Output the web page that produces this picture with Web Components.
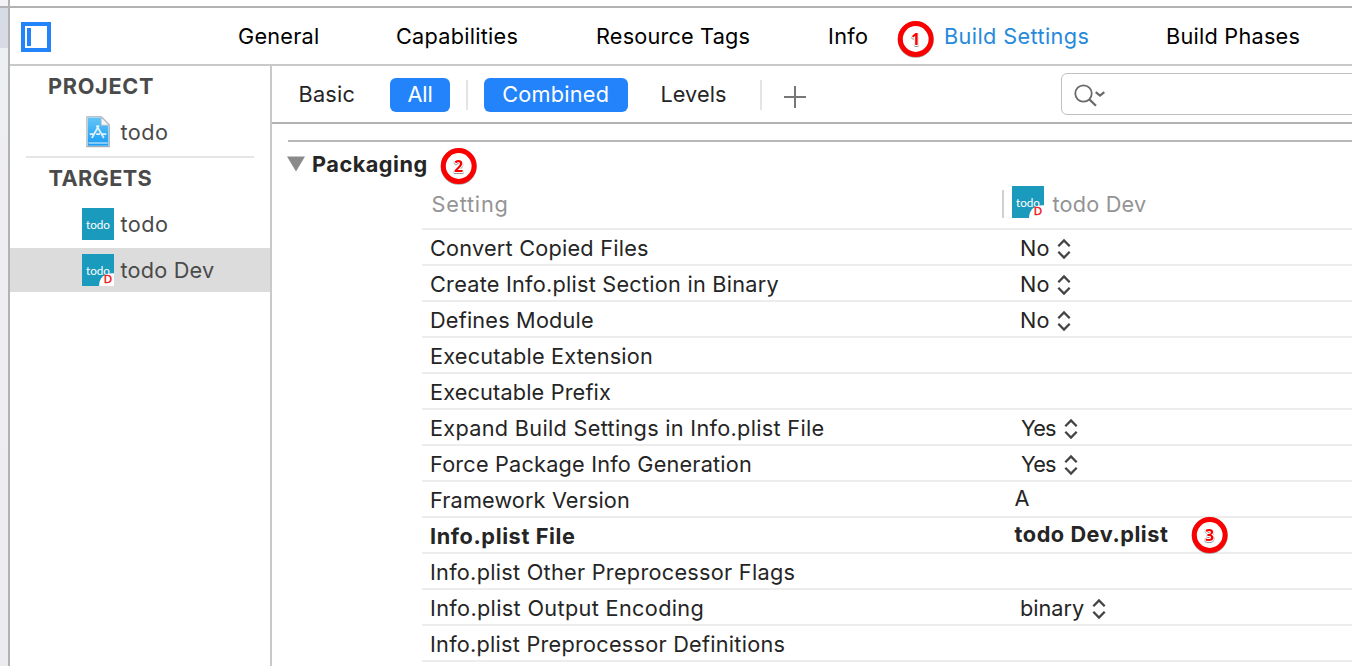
<!DOCTYPE html>
<html lang="en">
<head>
<meta charset="utf-8">
<title>Build Settings</title>
<style>
html, body { margin: 0; height: 100%; overflow: hidden; background: #fff; }
body { font-family: Inter, "Liberation Sans", sans-serif; font-size: 21.7px; font-weight: 400; color: #252525; }
</style>
</head>
<body>
<xc-window></xc-window>
<script>
const define = (name, html, setup) => {
  const tpl = document.createElement('template');
  tpl.innerHTML = html;
  customElements.define(name, class extends HTMLElement {
    connectedCallback() {
      if (this.shadowRoot) return;
      this.attachShadow({ mode: 'open' }).append(tpl.content.cloneNode(true));
      if (setup) setup.call(this, this.shadowRoot);
    }
  });
};
const ctx = document.createElement('canvas').getContext('2d');

/* A single-line label tracked to a given width; its box hugs the glyphs. */
define('xc-text', `<style>
:host { display: block; flex: none; line-height: 30px; height: 30px; white-space: nowrap; }
span { display: block; }
</style><span></span>`, function (root) {
  const s = root.querySelector('span'), text = this.getAttribute('text'), w = +this.getAttribute('w');
  const cs = getComputedStyle(this);
  s.textContent = text;
  ctx.font = `${cs.fontWeight} ${cs.fontSize} ${cs.fontFamily}`;
  const m = ctx.measureText(text);
  this.style.width = w + 'px';
  s.style.marginLeft = m.actualBoundingBoxLeft + 'px';
  if (text.length > 1) s.style.letterSpacing = ((w - m.actualBoundingBoxLeft - m.actualBoundingBoxRight) / (text.length - 1)).toFixed(3) + 'px';
});

define('xc-badge', `<style>
:host { display: block; flex: none; width: 38px; height: 38px; }
svg { display: block; overflow: visible; }
text { font: 700 16px "Noto Sans", "Open Sans", sans-serif; text-anchor: middle; filter: drop-shadow(0 1px .4px rgba(0,0,0,.4)); }
</style><svg width="38" height="38" viewBox="0 0 38 38">
<circle cx="18.7" cy="19.6" r="15.6" fill="none" stroke="#555" stroke-opacity=".55" stroke-width="5"/>
<circle cx="18.7" cy="19" r="15.4" fill="#fff" stroke="#fb0000" stroke-width="5"/>
<text x="18.7" y="25" fill="#f90000" stroke="#fff" stroke-width="2" stroke-linejoin="round" paint-order="stroke"></text>
</svg>`, function (root) {
  root.querySelector('text').textContent = this.getAttribute('n');
});

define('xc-app-icon', `<style>
:host { display: block; flex: none; width: 32px; height: 32px; }
svg { display: block; }
text { font-family: Lato, sans-serif; }
</style><svg width="32" height="32" viewBox="0 0 32 32">
<rect width="32" height="32" fill="#1a9abc"/>
<text x="4" y="20.8" font-size="12" fill="#fff" textLength="24" lengthAdjust="spacingAndGlyphs">todo</text>
<g><path d="M17 32Q17.4 20 30 19.2H32V32Z" fill="#fff"/>
<text x="21.8" y="29" font-size="11.5" style="font-family:'Open Sans',sans-serif" fill="#f01820" stroke="#f01820" stroke-width=".5">D</text></g></svg>`, function (root) {
  if (!this.hasAttribute('dev')) root.querySelector('g').remove();
});

define('xc-project-icon', `<style>:host { display: block; flex: none; width: 26px; height: 32px; } svg { display: block; }</style>
<svg width="26" height="32" viewBox="0 0 26 32">
<defs><linearGradient id="g" x2="0" y2="1"><stop stop-color="#62c4f6"/><stop offset="1" stop-color="#1a9cf4"/></linearGradient></defs>
<g transform="translate(.9 0)">
<path d="M1 .7H15.5L23.4 8.8V30.6H1Z" fill="#fff" stroke="#a5adb3" stroke-width="1.1"/>
<path d="M1.9 1.6H15L22.5 9.6V29.7H1.9Z" fill="url(#g)"/>
<path d="M15.3 1.2V9.2H23Z" fill="#f4f6f8" stroke="#b4bdc4" stroke-width=".8"/>
<path d="M2.6 27H21.8" stroke="#fff" stroke-width="1.1" opacity=".85"/>
<path d="M13 9.5L6 22M10.6 9.5L18 22M3.8 18.2H8.2M10.3 18.2H14M16 18.2H20.4" fill="none" stroke="#fff" stroke-width="1.7" opacity=".85"/></g>
</svg>`);

define('xc-tabs', `<style>
:host { display: flex; height: 56px; align-items: center; border-bottom: 2px solid #c9c9c9; color: #000; padding-left: 11px; }
.nav { flex: none; width: 30px; height: 30px; margin-top: 2px; margin-right: 188px; }
.a { margin-right: 79px; } .b { margin-right: 79.5px; } .c { margin-right: 79.5px; }
.d { margin-right: 30px; } xc-badge { margin: 6px 10px 0 0; }
.on { color: #2589dc; margin-right: 78.5px; }
</style>
<svg class="nav" viewBox="0 0 30 30"><path d="M2 2H28V28H2Z" fill="none" stroke="#2383fb" stroke-width="4"/><path d="M6 6H10V24H6Z" fill="#2383fb"/></svg>
<xc-text class="a" text="General" w="79"></xc-text>
<xc-text class="b" text="Capabilities" w="120.5"></xc-text>
<xc-text class="c" text="Resource Tags" w="152.5"></xc-text>
<xc-text class="d" text="Info" w="38"></xc-text>
<xc-badge n="1"></xc-badge>
<xc-text class="on" text="Build Settings" w="143.5"></xc-text>
<xc-text text="Build Phases" w="132.5"></xc-text>`);

define('xc-side-item', `<style>
:host { display: flex; align-items: center; height: 44px; padding-left: 72px; color: #4a4a4a; }
:host([selected]) { background: #dcdcdc; }
.i { width: 32px; margin-right: 6.5px; display: flex; justify-content: center; }
</style><div class="i"><slot></slot></div>`, function (root) {
  const n = document.createElement('xc-text');
  n.setAttribute('text', this.getAttribute('text')); n.setAttribute('w', this.getAttribute('w'));
  root.append(n);
});

define('xc-sidebar', `<style>
:host { display: block; flex: none; width: 260px; border-right: 2px solid #c9c9c9; }
.h { font-weight: 700; color: #4a4a4a; margin-left: 39px; }
.p { padding-top: 5px; } .t { margin-left: 38.5px; } hr { border: 0; height: 2px; background: #e6e6e6; margin: 2px 16px 5px; }
.gap { height: 9px; } .sp { height: 2px; }
</style>
<xc-text class="h p" text="PROJECT" w="104"></xc-text><div class="gap"></div>
<xc-side-item text="todo" w="46.5"><xc-project-icon></xc-project-icon></xc-side-item>
<hr>
<xc-text class="h t" text="TARGETS" w="103"></xc-text><div class="gap"></div>
<xc-side-item text="todo" w="46.5"><xc-app-icon></xc-app-icon></xc-side-item><div class="sp"></div>
<xc-side-item selected text="todo Dev" w="93.5"><xc-app-icon dev></xc-app-icon></xc-side-item>`);

define('xc-toolbar', `<style>
:host { display: flex; align-items: center; height: 56px; border-bottom: 2px solid #b2b2b2; padding-left: 27.5px; }
.pill { display: flex; flex: none; justify-content: center; align-items: center; height: 34px; margin-top: 2px; border-radius: 6px; background: #2383fb; color: #fff; }
.pill xc-text { margin-top: -2px; margin-left: -1px; }
.all { width: 60px; margin-left: 35.5px; } .comb { width: 144px; margin-left: 16px; }
.sep { flex: none; width: 2px; height: 30px; margin-top: 2px; background: #e4e4e4; }
.plus { flex: none; margin: 6px 0 0 22px; }
.search { flex: none; box-sizing: border-box; width: 320px; height: 42px; border: 1.5px solid #c0c0c0; border-radius: 6px; margin-left: 255px; }
.search svg { display: block; }
</style>
<xc-text text="Basic" w="55"></xc-text>
<div class="pill all"><xc-text text="All" w="24"></xc-text></div>
<div class="sep" style="margin-left:16px"></div>
<div class="pill comb"><xc-text text="Combined" w="104.5"></xc-text></div>
<xc-text style="margin-left:33.5px" text="Levels" w="64.5"></xc-text>
<div class="sep" style="margin-left:34px"></div>
<svg class="plus" width="22" height="22"><path d="M0 11H22M11 0V22" stroke="#777" stroke-width="2"/></svg>
<div class="search"><svg width="60" height="40" fill="none" stroke="#6a6a6a"><circle cx="21.5" cy="19.5" r="8.2" stroke-width="1.8"/><path d="M27.3 25.4L34 31.7" stroke-width="2.2"/><path d="M33.7 18.2L38 21.6L42.3 18.2" stroke-width="2.2"/></svg></div>`);

define('xc-row', `<style>
:host { display: flex; align-items: center; height: 34px; border-bottom: 2px solid #ededed; padding-left: 9px; }
:host([bold]) { font-weight: 700; }
.n { width: 583.5px; flex: none; padding-top: 2px; } .v { display: flex; align-items: center; }
.v.s { margin-left: 6.5px; padding-top: 2px; } .v.p { margin-top: -2px; }
svg { display: block; margin: 1px 0 -1px 8px; } xc-badge { margin-left: 22.5px; margin-top: 1px; margin-bottom: -1px; }
</style><div class="n"></div><div class="v"></div>`, function (root) {
  const mk = (t, w) => `<xc-text text="${t}" w="${w}"></xc-text>`, a = k => this.getAttribute(k);
  root.querySelector('.n').innerHTML = mk(a('name'), a('w'));
  const v = root.querySelector('.v');
  if (!a('value')) return;
  v.classList.add(this.hasAttribute('step') ? 's' : 'p');
  v.innerHTML = mk(a('value'), a('vw'))
    + (this.hasAttribute('step') ? '<svg width="14" height="22" fill="none" stroke="#444" stroke-width="2.3"><path d="M1.3 8.3L7 2.4L12.7 8.3M1.3 13.7L7 19.6L12.7 13.7"/></svg>' : '')
    + (a('badge') ? `<xc-badge n="${a('badge')}"></xc-badge>` : '');
});

define('xc-settings', `<style>
:host { display: block; padding: 16px 0 0 16px; }
.line { height: 2px; background: #b8b8b8; }
.sec { display: flex; align-items: center; height: 44px; font-weight: 700; }
.sec svg { margin: 0 8px 0 -1px; } .sec xc-badge { margin: 4px 0 0 13px; }
.head { display: flex; align-items: center; height: 42px; margin-left: 134px; padding-left: 10.5px; border-bottom: 2px solid #ededed; color: #949494; }
.head > * { margin-top: -7px; }
.head .bar { width: 2px; height: 28px; background: #d0d0d0; margin: -7px 8px 0 495.5px; }
.head xc-app-icon { margin: -11px 8.5px 0 0; }
.rows { margin-left: 134px; }
</style>
<div class="line"></div>
<div class="sec"><svg width="18" height="16"><path d="M0 .5H18L9 15.5Z" fill="#8a8a8a"/></svg><xc-text text="Packaging" w="113.5"></xc-text><xc-badge n="2"></xc-badge></div>
<div class="head"><xc-text text="Setting" w="74"></xc-text><div class="bar"></div><xc-app-icon dev></xc-app-icon><xc-text text="todo Dev" w="93.5"></xc-text></div>
<div class="rows">
<xc-row name="Convert Copied Files" w="217" value="No" vw="27.5" step></xc-row>
<xc-row name="Create Info.plist Section in Binary" w="347.5" value="No" vw="27.5" step></xc-row>
<xc-row name="Defines Module" w="162" value="No" vw="27.5" step></xc-row>
<xc-row name="Executable Extension" w="221"></xc-row>
<xc-row name="Executable Prefix" w="180"></xc-row>
<xc-row name="Expand Build Settings in Info.plist File" w="392.5" value="Yes" vw="35" step></xc-row>
<xc-row name="Force Package Info Generation" w="320" value="Yes" vw="35" step></xc-row>
<xc-row name="Framework Version" w="198" value="A" vw="13"></xc-row>
<xc-row bold name="Info.plist File" w="144" value="todo Dev.plist" vw="153.5" badge="3"></xc-row>
<xc-row name="Info.plist Other Preprocessor Flags" w="363.5"></xc-row>
<xc-row name="Info.plist Output Encoding" w="271.5" value="binary" vw="63" step></xc-row>
<xc-row name="Info.plist Preprocessor Definitions" w="353.5"></xc-row>
</div>`);

define('xc-window', `<style>
:host { display: flex; flex-direction: column; height: 666px; width: 1352px; overflow: hidden; }
.top { display: flex; flex: none; height: 6px; } .top i { width: 8px; background: #f2f3f6; border-right: 2px solid #b2b2b2; }
.rule { flex: none; height: 2px; background: #b2b2b2; }
.body { display: flex; flex: 1; min-height: 0; }
.edge { flex: none; width: 8px; border-right: 2px solid #b2b2b2; background: linear-gradient(#d6dbe6 0, #d8dae5 40px, #eeeff3 40px, #ececee 100%); }
.main { flex: 1; min-width: 0; } .cols { display: flex; height: 600px; } .detail { flex: 1; min-width: 0; overflow: hidden; }
</style>
<div class="top"><i></i></div><div class="rule"></div>
<div class="body"><div class="edge"></div><div class="main"><xc-tabs></xc-tabs>
<div class="cols"><xc-sidebar></xc-sidebar><div class="detail"><xc-toolbar></xc-toolbar><xc-settings></xc-settings></div></div></div></div>`);
</script>
</body>
</html>
